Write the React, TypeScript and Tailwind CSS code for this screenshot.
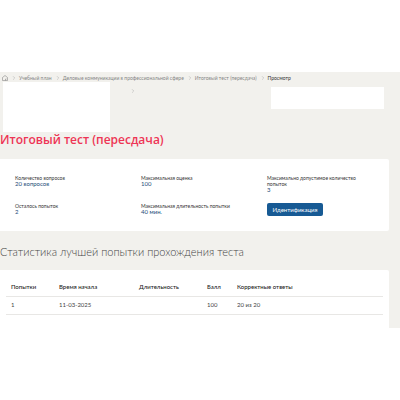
import { ChevronRight } from "lucide-react";

const crumbs = [
  "Учебный план",
  "Деловые коммуникации в профессиональной сфере",
  "Итоговый тест (пересдача)",
];

const details = [
  { label: "Количество вопросов", value: "20 вопросов" },
  { label: "Максимальная оценка", value: "100" },
  { label: "Максимально допустимое количество попыток", value: "3" },
  { label: "Осталось попыток", value: "2" },
  { label: "Максимальная длительность попытки", value: "40 мин." },
];

const columns = [
  { title: "Попытки", width: "w-[48px]", value: "1" },
  { title: "Время начала", width: "w-[80px]", value: "11-03-2025" },
  { title: "Длительность", width: "w-[68px]", value: "" },
  { title: "Балл", width: "w-[30px]", value: "100" },
  { title: "Корректные ответы", width: "w-auto", value: "20 из 20" },
];

function Breadcrumbs() {
  return (
    <nav aria-label="Навигация" className="flex h-[10px] items-center pt-px pl-[2px] text-[5px] leading-[8px] text-[#858585]">
      <a href="#home" aria-label="Главная">
        <svg viewBox="0 0 12 12" className="size-[6px]" fill="none" stroke="#888888" strokeWidth="1.2">
          <path d="M1 5 6 1l5 4v6H1Z M7 11V8h2" />
        </svg>
      </a>
      <ol className="flex items-center whitespace-nowrap">
        {crumbs.map((crumb) => (
          <li key={crumb} className="flex items-center">
            <ChevronRight className="mr-[2px] ml-[3px] size-[6px] text-[#aaaaaa]" />
            <a href="#crumb">{crumb}</a>
          </li>
        ))}
        <li className="flex items-center text-[#333333]" aria-current="page">
          <ChevronRight className="mr-[2px] ml-[3px] size-[6px] text-[#aaaaaa]" />
          Просмотр
        </li>
      </ol>
    </nav>
  );
}

export default function App() {
  return (
    <div className="min-h-screen bg-white py-[72px] font-[Lato,'Open_Sans',sans-serif]">
      <main className="bg-[#f2f1ed]">
        <Breadcrumbs />
        <div className="flex items-start pr-4 pl-[3px]">
          <div className="h-[50px] w-[107px] bg-white" />
          <ChevronRight className="mt-[6px] ml-5 size-[6px] text-[#aaaaaa]" />
          <div className="mt-[5px] ml-auto h-[22px] w-[113px] bg-white" />
        </div>
        <h1 className="font-['Open_Sans','Noto_Sans',sans-serif] text-[12px] leading-4 font-semibold text-[#ee3555]">
          Итоговый тест (пересдача)
        </h1>

        <section className="mt-[11px] mr-[11px] rounded-r-[2px] bg-white pt-4 pr-[11px] pb-[15px] pl-[15px] text-[5px] leading-[6px] text-[#333333]">
          <dl className="grid grid-cols-3 gap-x-[15px] gap-y-[10px]">
            {details.map((item) => (
              <div key={item.label}>
                <dt className="max-w-[100px]">{item.label}</dt>
                <dd className="text-[6px] text-[#244d78]">{item.value}</dd>
              </div>
            ))}
            <div>
              <dd>
                <button className="block h-[13px] w-[56px] rounded-[2px] bg-[#175a94] text-[6px] leading-[12px] text-white">
                  Идентификация
                </button>
              </dd>
            </div>
          </dl>
        </section>

        <h2 className="mt-[13px] text-[11px] leading-4 font-light text-[#444444]">Статистика лучшей попытки прохождения теста</h2>

        <section className="mt-[10px] mr-[11px] rounded-tr-[2px] bg-white px-[6px] pt-[9px] pb-[13px]">
          <table className="w-full table-fixed text-left text-[6px] leading-[8px] text-[#444444]">
            <thead>
              <tr className="h-[17px] border-b border-[#e8e7e5]">
                {columns.map((column) => (
                  <th key={column.title} scope="col" className={`${column.width} pl-[5px] font-medium whitespace-nowrap text-[#222222]`}>
                    {column.title}
                  </th>
                ))}
              </tr>
            </thead>
            <tbody>
              <tr className="h-[18px] border-b border-[#e8e7e5]">
                {columns.map((column) => (
                  <td key={column.title} className="pl-[5px]">{column.value}</td>
                ))}
              </tr>
            </tbody>
          </table>
        </section>
      </main>
    </div>
  );
}
